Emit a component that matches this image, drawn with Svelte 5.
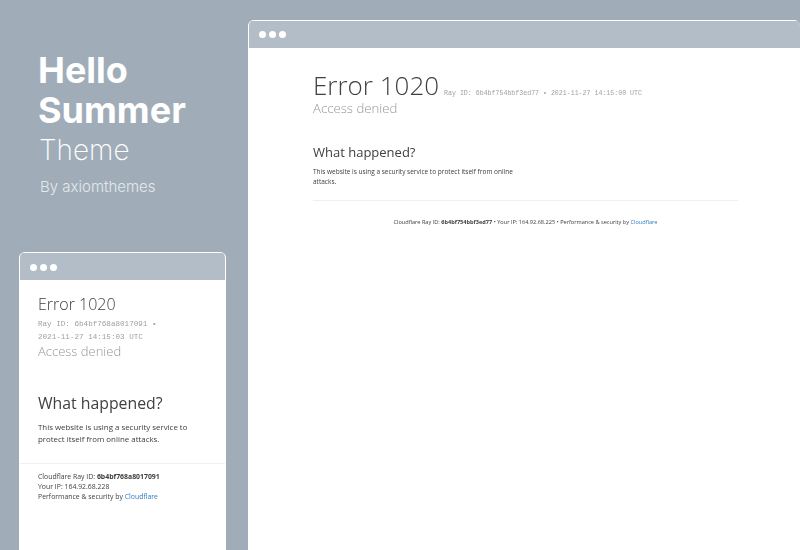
<script lang="ts">
  const dots = [0, 1, 2];
</script>

<div class="page">
  <aside class="side">
    <div class="intro">
      <h1>Hello<br />Summer</h1>
      <p class="theme">Theme</p>
      <p class="by">By axiomthemes</p>
    </div>
    <div class="win small">
      <div class="bar">
        {#each dots as d (d)}<span class="dot"></span>{/each}
      </div>
      <div class="small-head">
        <h2>Error 1020</h2>
        <div class="ray">Ray ID: 6b4bf768a8017091 •<br />2021-11-27 14:15:03 UTC</div>
        <div class="denied">Access denied</div>
      </div>
      <div class="small-body">
        <h3>What happened?</h3>
        <p>This website is using a security service to protect itself from online attacks.</p>
      </div>
      <div class="small-foot">
        <div>Cloudflare Ray ID: <strong>6b4bf768a8017091</strong></div>
        <div>Your IP: 164.92.68.228</div>
        <div>Performance &amp; security by <span class="link">Cloudflare</span></div>
      </div>
    </div>
  </aside>
  <main class="win large">
    <div class="bar">
      {#each dots as d (d)}<span class="dot"></span>{/each}
    </div>
    <div class="content">
      <div class="title">
        <h2>Error 1020</h2>
        <span class="ray">Ray ID: 6b4bf754bbf3ed77 • 2021-11-27 14:15:00 UTC</span>
      </div>
      <div class="denied">Access denied</div>
      <h3>What happened?</h3>
      <p>This website is using a security service to protect itself from online attacks.</p>
      <div class="foot">
        Cloudflare Ray ID: <strong>6b4bf754bbf3ed77</strong> • Your IP: 164.92.68.225 • Performance &amp; security by <span class="link">Cloudflare</span>
      </div>
    </div>
  </main>
</div>

<style>
  :global(body) {
    margin: 0;
    background: #a0adb9;
  }
  .page {
    width: 800px;
    height: 550px;
    overflow: hidden;
    display: flex;
    background: #a0adb9;
    font-family: "Open Sans", sans-serif;
    color: #404040;
  }
  .side {
    width: 248px;
    flex: none;
    display: flex;
    flex-direction: column;
  }
  .intro {
    padding: 50px 0 0 38px;
    height: 252px;
    box-sizing: border-box;
    font-family: Inter, sans-serif;
    color: #fff;
  }
  h1 {
    margin: 0;
    font-size: 36px;
    line-height: 40px;
    font-weight: 700;
  }
  .theme {
    margin: 2px 0 0 1px;
    font-size: 28px;
    line-height: 36px;
    font-weight: 200;
  }
  .by {
    margin: 9px 0 0 2px;
    font-size: 15px;
    line-height: 20px;
    font-weight: 300;
    color: #e3e8ec;
  }
  .win {
    background: #fff;
    border-radius: 6px 6px 0 0;
    box-sizing: border-box;
    overflow: hidden;
  }
  .bar {
    height: 27px;
    background: #b2bdc8;
    border-top: 1px solid #fff;
    box-sizing: border-box;
    display: flex;
    align-items: center;
    gap: 3px;
    padding-left: 10px;
  }
  .dot {
    width: 7px;
    height: 7px;
    border-radius: 50%;
    background: #fff;
  }
  .small {
    margin-left: 19px;
    width: 207px;
    height: 298px;
    flex: none;
    border-left: 1px solid #fff;
    border-right: 1px solid #fff;
  }
  .small .bar {
    height: 28px;
    padding-top: 1px;
  }
  .small-head {
    padding: 13px 18px 0;
    filter: blur(0.3px);
  }
  .small-head h2 {
    margin: 0;
    font-size: 16px;
    line-height: 22px;
    font-weight: 300;
  }
  .small-head .ray {
    font-family: "Liberation Mono", monospace;
    font-size: 7.6px;
    line-height: 12.5px;
    color: #a0a0a0;
    margin-top: 3px;
  }
  .small-head .denied {
    margin-top: -1px;
    font-size: 13px;
    line-height: 18px;
    font-weight: 300;
    color: #979797;
  }
  .small-body {
    padding: 31px 18px 18px;
    border-bottom: 1px solid #efefef;
  }
  .small-body h3 {
    margin: 0;
    font-size: 15.8px;
    line-height: 24px;
    font-weight: 400;
    filter: blur(0.3px);
  }
  .small-body p {
    margin: 6px 0 0;
    font-size: 7.9px;
    line-height: 12px;
    filter: blur(0.3px);
  }
  .small-foot {
    padding: 8px 18px 0;
    font-size: 6.9px;
    line-height: 10px;
    filter: blur(0.3px);
  }
  .link {
    color: #2f7bbf;
  }
  .large {
    width: 552px;
    height: 530px;
    margin-top: 20px;
    flex: none;
    border-left: 1px solid #fff;
  }
  .large .bar {
    height: 28px;
  }
  .content {
    padding: 23px 0 0 64px;
    width: 425px;
  }
  .title {
    display: flex;
    align-items: baseline;
    gap: 5px;
    white-space: nowrap;
    filter: blur(0.3px);
  }
  .title h2 {
    margin: 0;
    font-size: 26px;
    line-height: 28px;
    font-weight: 300;
  }
  .title .ray {
    font-family: "Liberation Mono", monospace;
    font-size: 6.6px;
    color: #a0a0a0;
  }
  .content .denied {
    font-size: 13.2px;
    line-height: 18px;
    font-weight: 300;
    color: #979797;
    filter: blur(0.3px);
  }
  .content h3 {
    margin: 25px 0 0;
    font-size: 13px;
    line-height: 20px;
    font-weight: 400;
    filter: blur(0.3px);
  }
  .content p {
    margin: 5px 0 0;
    width: 205px;
    font-size: 6.5px;
    line-height: 10px;
    filter: blur(0.3px);
  }
  .foot {
    margin-top: 13px;
    border-top: 1px solid #efefef;
    padding-top: 17px;
    font-size: 5.6px;
    line-height: 8px;
    text-align: center;
    white-space: nowrap;
    filter: blur(0.3px);
  }
</style>
